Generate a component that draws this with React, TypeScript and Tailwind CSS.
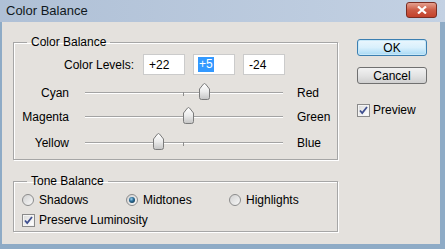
import type { ReactNode } from 'react';

const font = { fontFamily: '"Liberation Sans", Arial, sans-serif' };

function Thumb() {
  return (
    <svg width="11" height="17" viewBox="0 0 11 17" className="block">
      <defs>
        <linearGradient id="thumbFill" x1="0" y1="0" x2="0" y2="1">
          <stop offset="0" stopColor="#ffffff" />
          <stop offset="0.5" stopColor="#ebebeb" />
          <stop offset="1" stopColor="#c4c4c4" />
        </linearGradient>
      </defs>
      <path
        d="M0.5 6 L4.5 1 Q5.5 0 6.5 1 L10.5 6 V14.5 Q10.5 16.5 8.5 16.5 H2.5 Q0.5 16.5 0.5 14.5 Z"
        fill="url(#thumbFill)"
        stroke="#7b7b7b"
      />
    </svg>
  );
}

function Slider({ left, right, pos, tick = true, className = '' }: { left: string; right: string; pos: number; tick?: boolean; className?: string }) {
  return (
    <div className={`flex items-center h-[24px] ${className}`}>
      <span className="w-[55px] text-right">{left}</span>
      <div className="relative ml-[16px] w-[198px] h-[2px]">
        <div className="h-px bg-[#a3a3a3]" />
        <div className="h-px bg-white" />
        {tick && <div className="absolute left-[98px] top-0 w-px h-[4px] bg-[#8d8d8d]" />}
        <div className="absolute top-[-9px]" style={{ left: pos }}>
          <Thumb />
        </div>
      </div>
      <span className="ml-[14px]">{right}</span>
    </div>
  );
}

function Check() {
  return (
    <svg width="13" height="13" viewBox="0 0 13 13" className="block shrink-0">
      <defs>
        <linearGradient id="chkFill" x1="0" y1="0" x2="1" y2="1">
          <stop offset="0" stopColor="#dcdcdc" />
          <stop offset="1" stopColor="#ffffff" />
        </linearGradient>
      </defs>
      <rect x="0.5" y="0.5" width="12" height="12" fill="#f4f4f4" stroke="#8a8a8a" />
      <rect x="2" y="2" width="9" height="9" fill="url(#chkFill)" />
      <path d="M3 6.5 L5.2 9 L10 3" fill="none" stroke="#3f4f8f" strokeWidth="1.8" />
    </svg>
  );
}

function Radio({ on = false }: { on?: boolean }) {
  return (
    <svg width="12" height="12" viewBox="0 0 12 12" className="block shrink-0">
      <defs>
        <linearGradient id="radFill" x1="0" y1="0" x2="1" y2="1">
          <stop offset="0" stopColor="#cfcfcf" />
          <stop offset="1" stopColor="#fafafa" />
        </linearGradient>
        <radialGradient id="radDot" cx="0.4" cy="0.35" r="0.7">
          <stop offset="0" stopColor="#9fd3f0" />
          <stop offset="0.5" stopColor="#2c6f9a" />
          <stop offset="1" stopColor="#173e58" />
        </radialGradient>
      </defs>
      <circle cx="6" cy="6" r="5.5" fill="url(#radFill)" stroke="#8b8b8b" />
      {on && <circle cx="6" cy="6" r="3" fill="url(#radDot)" />}
    </svg>
  );
}

function Group({ title, children, className }: { title: string; children: ReactNode; className?: string }) {
  return (
    <fieldset className={`border border-[#a6a6a6] shadow-[inset_1px_1px_0_#ffffff,1px_1px_0_#ffffff] ${className ?? ''}`}>
      <legend className="ml-[13px] px-[4px] leading-[16px]">{title}</legend>
      {children}
    </fieldset>
  );
}

function Field({ value, selected = false }: { value: string; selected?: boolean }) {
  return (
    <div className="w-[42px] h-[21px] bg-white border border-[#cbcbcb] flex items-center pl-[4px]">
      {selected ? <span className="bg-[#3399ff] text-white px-px leading-[15px]">{value}</span> : <span className="px-px">{value}</span>}
    </div>
  );
}

export default function App() {
  return (
    <div className="w-[445px] h-[249px] bg-[#8eabc6] flex flex-col text-[12px] text-black overflow-hidden" style={font}>
      {/* title bar */}
      <div className="h-[22px] shrink-0 flex items-center justify-between pl-[6px] pr-[8px] bg-gradient-to-r from-[#afc0d6] to-[#c3d1e3]">
        <span className="text-[13px] text-[#101820]">Color Balance</span>
        <div className="w-[31px] h-[16px] mt-[-3px] rounded-[3px] border border-[#7b2d22] bg-gradient-to-b from-[#e4a08f] via-[#cc5b45] to-[#c3412b] flex items-center justify-center">
          <svg width="10" height="8" viewBox="0 0 10 8">
            <path d="M1 0.5 L9 7.5 M9 0.5 L1 7.5" stroke="#ffffff" strokeWidth="2.2" />
          </svg>
        </div>
      </div>

      <div className="flex-1 ml-[2px] mr-[5px] mb-[5px] bg-[#e4e1dd] flex pl-[11px] pt-[12px]">
        {/* left column */}
        <div className="w-[325px] flex flex-col">
          <Group title="Color Balance" className="h-[126px]">
            <div className="flex items-center mt-[4px]">
              <span className="w-[120px] text-right">Color Levels:</span>
              <div className="flex gap-[8px] ml-[9px]">
                <Field value="+22" />
                <Field value="+5" selected />
                <Field value="-24" />
              </div>
            </div>
            <div className="flex flex-col mt-[6px]">
              <Slider left="Cyan" right="Red" pos={114} />
              <Slider left="Magenta" right="Green" pos={98} tick={false} />
              <Slider left="Yellow" right="Blue" pos={68} className="mt-[2px]" />
            </div>
          </Group>

          <Group title="Tone Balance" className="mt-[13px] h-[59px]">
            <div className="flex items-center h-[20px] mt-[1px] pl-[8px]">
              <div className="flex items-center gap-[5px] w-[104px]">
                <Radio />
                <span>Shadows</span>
              </div>
              <div className="flex items-center gap-[5px] w-[103px]">
                <Radio on />
                <span>Midtones</span>
              </div>
              <div className="flex items-center gap-[5px]">
                <Radio />
                <span>Highlights</span>
              </div>
            </div>
            <div className="flex items-center gap-[4px] h-[18px] mt-[1px] pl-[8px]">
              <Check />
              <span>Preserve Luminosity</span>
            </div>
          </Group>
        </div>

        {/* right column */}
        <div className="ml-[19px] w-[70px] flex flex-col pt-[5px]">
          <button className="h-[17px] rounded-[3px] border border-[#3c7fb1] bg-gradient-to-b from-[#eaf6fd] via-[#d9f0fc] to-[#a7d9f5] leading-none shadow-[inset_0_0_0_1px_#c8e8f8]">
            OK
          </button>
          <button className="mt-[11px] h-[17px] rounded-[3px] border border-[#707070] bg-gradient-to-b from-[#f2f2f2] via-[#e3e3e3] to-[#cfcfcf] leading-none">
            Cancel
          </button>
          <div className="flex items-center gap-[3px] mt-[17px]">
            <Check />
            <span>Preview</span>
          </div>
        </div>
      </div>
    </div>
  );
}
